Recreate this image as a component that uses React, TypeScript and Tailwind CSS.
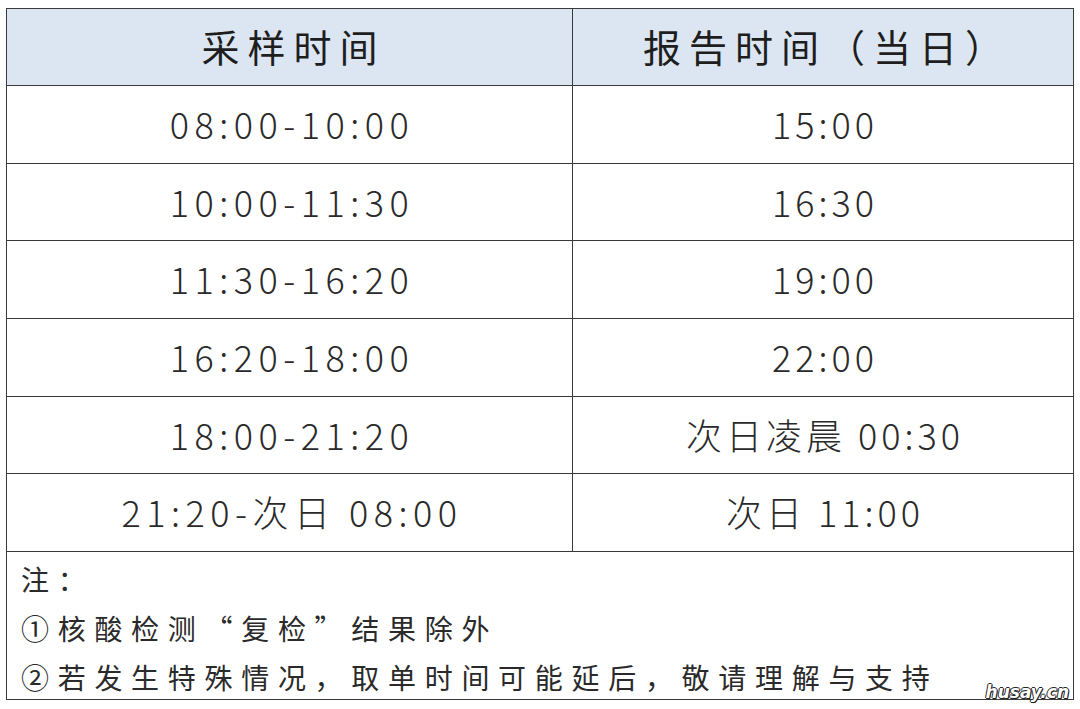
const rows: [string, string][] = [
  ['08:00-10:00', '15:00'],
  ['10:00-11:30', '16:30'],
  ['11:30-16:20', '19:00'],
  ['16:20-18:00', '22:00'],
  ['18:00-21:20', '次日凌晨 00:30'],
  ['21:20-次日 08:00', '次日 11:00'],
];

const font = { fontFamily: '"Noto Sans CJK SC", "Noto Sans", sans-serif' };

export default function App() {
  return (
    <div className="w-[1080px] h-[709px] bg-white pt-[8px] pl-[6px]" style={font}>
      <div className="w-[1068px] border border-[#3a3a3a]">
        <div className="grid grid-cols-[566px_1fr]">
          <div className="h-[77px] bg-[#dce6f2] border-r border-b border-[#3a3a3a] flex items-center justify-center text-[38px] tracking-[8px] text-[#1e1e1e] pl-[8px] pb-[4px]">
            采样时间
          </div>
          <div className="h-[77px] bg-[#dce6f2] border-b border-[#3a3a3a] flex items-center justify-center text-[38px] tracking-[8px] text-[#1e1e1e] pl-[8px] pb-[4px]">
            报告时间（当日）
          </div>
          {rows.map(([a, b]) => (
            <div key={a} className="contents">
              <div className="h-[77.7px] border-r border-b border-[#3a3a3a] flex items-center justify-center text-[36px] tracking-[5.5px] text-[#2a2a2a] font-light pl-[5px] pb-[3px]">
                {a}
              </div>
              <div className="h-[77.7px] border-b border-[#3a3a3a] flex items-center justify-center text-[36px] tracking-[4px] text-[#2a2a2a] font-light pl-[4px] pb-[3px]">
                {b}
              </div>
            </div>
          ))}
        </div>
        <div className="relative h-[147px] px-[14px] pt-[3px] text-[28px] tracking-[8.7px] text-[#2a2a2a] leading-[49px]">
          <div>注：</div>
          <div>①核酸检测“复检”结果除外</div>
          <div>②若发生特殊情况，取单时间可能延后，敬请理解与支持</div>
          <div className="absolute right-[4px] bottom-[-2px] text-[17px] tracking-normal leading-none font-bold italic text-white [text-shadow:1px_0_0_#222,-1px_0_0_#222,0_1px_0_#222,0_-1px_0_#222,1px_1px_0_#222]" style={{ fontFamily: '"DejaVu Sans", sans-serif' }}>
            husay.cn
          </div>
        </div>
      </div>
    </div>
  );
}
